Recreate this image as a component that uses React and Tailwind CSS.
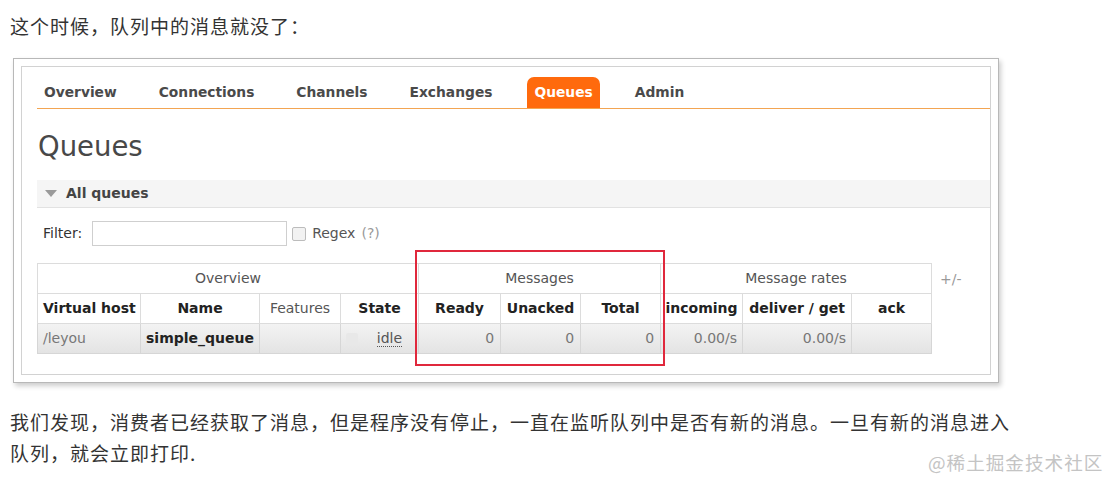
import React from "react";

const tabs = ["Overview", "Connections", "Channels", "Exchanges", "Queues", "Admin"];

export default function App() {
  const verdana = { fontFamily: '"DejaVu Sans", Verdana, sans-serif' };

  return (
    <div
      className="relative w-[1110px] h-[478px] bg-white overflow-hidden text-[#333]"
      style={{ fontFamily: '"Noto Sans CJK SC", "Noto Sans", sans-serif' }}
    >
      <p className="pl-[10px] pt-[10px] text-[19px] leading-[32px] tracking-[1px]">
        这个时候，队列中的消息就没了：
      </p>

      {/* screenshot frame */}
      <div className="ml-[13px] mt-[16px] w-[986px] h-[325px] border border-[#b8b8b8] bg-white p-[7px] shadow-[2px_3px_5px_rgba(0,0,0,0.2)]">
        <div
          className="h-full border border-[#d2d2d2] pl-[15px] pt-[10px]"
          style={verdana}
        >
          {/* tabs */}
          <div className="flex gap-[28px] border-b border-[#f3a552]">
            {tabs.map((t) => (
              <div
                key={t}
                className={
                  t === "Queues"
                    ? "h-[31px] px-[7px] flex items-center rounded-t-[7px] bg-[#ff6a0d] text-white text-[13.8px] font-bold"
                    : "h-[31px] px-[7px] flex items-center text-[#4a4a4a] text-[13.8px] font-bold"
                }
              >
                {t}
              </div>
            ))}
          </div>

          <h1 className="mt-[20px] text-[27.5px] leading-[34px] text-[#484848] pl-[1px]">Queues</h1>

          {/* All queues bar */}
          <div className="mt-[17px] h-[28px] flex items-center bg-[#f5f5f5] border-b border-[#e2e2e2]">
            <svg width="12" height="8" viewBox="0 0 12 8" className="ml-[8px]">
              <polygon points="0,0 12,0 6,7" fill="#9a9a9a" />
            </svg>
            <span className="ml-[9px] text-[14px] font-bold text-[#444]">All queues</span>
          </div>

          {/* filter */}
          <div className="mt-[13px] flex items-center h-[25px] text-[14px]">
            <span className="ml-[6px] text-[#333]">Filter:</span>
            <div className="ml-[10px] w-[195px] h-[25px] border border-[#cfcfcf] bg-white" />
            <div className="ml-[5px] w-[14px] h-[14px] border border-[#bcbcbc] rounded-[2px] bg-[#f2f2f2]" />
            <span className="ml-[6px] text-[#555]">Regex</span>
            <span className="ml-[6px] text-[#999]">(?)</span>
          </div>

          {/* table */}
          <div className="relative mt-[17px] flex items-start">
            <table className="table-fixed border-collapse w-[894px] text-[14px]">
              <colgroup>
                <col className="w-[103px]" />
                <col className="w-[119px]" />
                <col className="w-[81px]" />
                <col className="w-[78px]" />
                <col className="w-[82px]" />
                <col className="w-[80px]" />
                <col className="w-[80px]" />
                <col className="w-[82px]" />
                <col className="w-[109px]" />
                <col className="w-[80px]" />
              </colgroup>
              <thead>
                <tr className="h-[30px]">
                  <th colSpan={4} className="border border-[#dcdcdc] font-normal text-[#555]">Overview</th>
                  <th colSpan={3} className="border border-[#dcdcdc] font-normal text-[#555]">Messages</th>
                  <th colSpan={3} className="border border-[#dcdcdc] font-normal text-[#555]">Message rates</th>
                </tr>
                <tr className="h-[30px] text-[#222]">
                  <th className="border border-[#dcdcdc] text-left pl-[5px] font-bold whitespace-nowrap">Virtual host</th>
                  <th className="border border-[#dcdcdc] font-bold">Name</th>
                  <th className="border border-[#dcdcdc] font-normal text-[#555]">Features</th>
                  <th className="border border-[#dcdcdc] font-bold">State</th>
                  <th className="border border-[#dcdcdc] font-bold">Ready</th>
                  <th className="border border-[#dcdcdc] font-bold">Unacked</th>
                  <th className="border border-[#dcdcdc] font-bold">Total</th>
                  <th className="border border-[#dcdcdc] font-bold whitespace-nowrap overflow-hidden">incoming</th>
                  <th className="border border-[#dcdcdc] font-bold whitespace-nowrap">deliver / get</th>
                  <th className="border border-[#dcdcdc] font-bold">ack</th>
                </tr>
              </thead>
              <tbody>
                <tr className="h-[30px] bg-gradient-to-b from-[#f3f3f3] to-[#e3e3e3] text-[#777]">
                  <td className="border border-[#d6d6d6] pl-[5px]">/leyou</td>
                  <td className="border border-[#d6d6d6] pl-[5px] font-bold text-[#222] whitespace-nowrap">simple_queue</td>
                  <td className="border border-[#d6d6d6]" />
                  <td className="border border-[#d6d6d6]">
                    <div className="flex items-center justify-between pl-[5px] pr-[16px]">
                      <span className="w-[12px] h-[12px] bg-[#e8e8e8] rounded-[2px]" />
                      <span className="text-[#555] border-b border-dotted border-[#555] leading-[15px]">idle</span>
                    </div>
                  </td>
                  <td className="border border-[#d6d6d6] text-right pr-[6px]">0</td>
                  <td className="border border-[#d6d6d6] text-right pr-[6px]">0</td>
                  <td className="border border-[#d6d6d6] text-right pr-[6px]">0</td>
                  <td className="border border-[#d6d6d6] text-right pr-[5px]">0.00/s</td>
                  <td className="border border-[#d6d6d6] text-right pr-[5px]">0.00/s</td>
                  <td className="border border-[#d6d6d6]" />
                </tr>
              </tbody>
            </table>
            <span className="ml-[8px] mt-[6px] text-[14px] text-[#999]">+/-</span>

            {/* red highlight box */}
            <div className="absolute left-[378px] top-[-13px] w-[250px] h-[116px] border-2 border-[#e0283c]" />
          </div>
        </div>
      </div>

      <div className="pl-[10px] pt-[23px] text-[19px] leading-[31px] tracking-[1px]">
        <p>我们发现，消费者已经获取了消息，但是程序没有停止，一直在监听队列中是否有新的消息。一旦有新的消息进入</p>
        <p>队列，就会立即打印.</p>
      </div>

      <span className="absolute left-[928px] top-[449px] text-[18.6px] leading-[26px] tracking-[1px] text-[#c4c4c4]">
        @稀土掘金技术社区
      </span>
    </div>
  );
}
